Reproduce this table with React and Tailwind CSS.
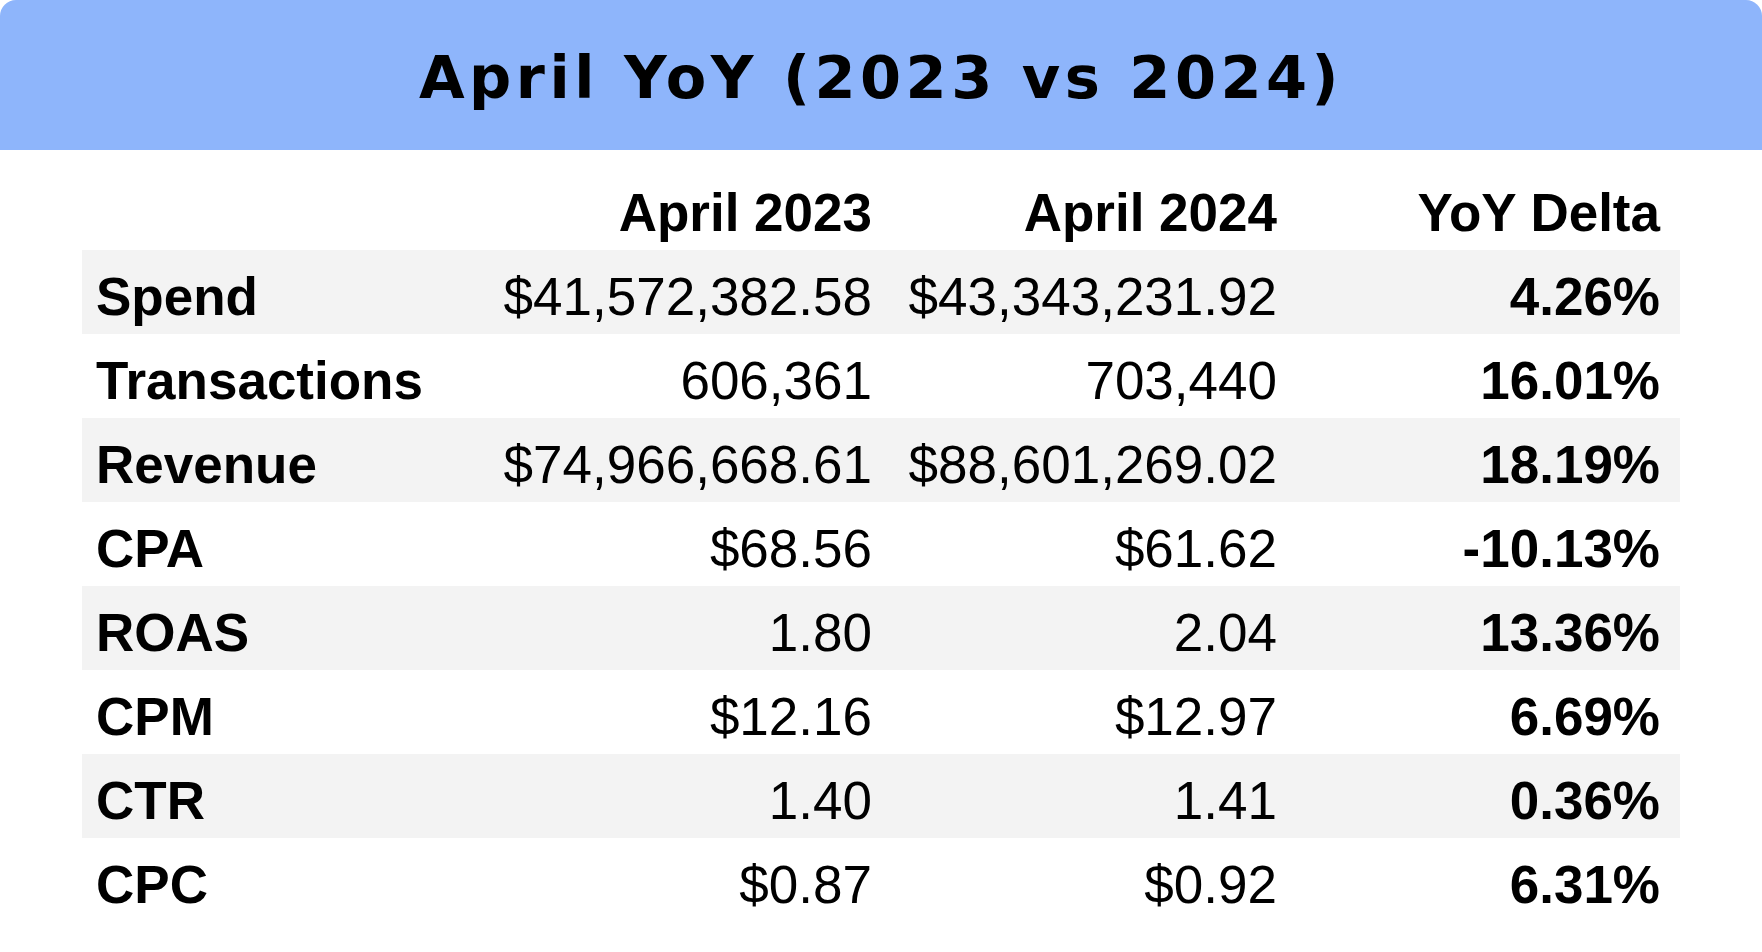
import React from 'react';

const rows = [
  ['Spend', '$41,572,382.58', '$43,343,231.92', '4.26%'],
  ['Transactions', '606,361', '703,440', '16.01%'],
  ['Revenue', '$74,966,668.61', '$88,601,269.02', '18.19%'],
  ['CPA', '$68.56', '$61.62', '-10.13%'],
  ['ROAS', '1.80', '2.04', '13.36%'],
  ['CPM', '$12.16', '$12.97', '6.69%'],
  ['CTR', '1.40', '1.41', '0.36%'],
  ['CPC', '$0.87', '$0.92', '6.31%'],
];

const cols = 'grid grid-cols-[404px_372px_405px_383px] h-[84px] pl-[14px] pr-[18px] pt-[9px] leading-[75px]';

export default function App() {
  return (
    <div className="w-[1762px] h-[952px] bg-white text-black overflow-hidden font-['Liberation_Sans',Arial,sans-serif]">
      <div className="h-[150px] bg-[#8eb5fb] rounded-t-[16px] flex items-center justify-center pt-[5px]">
        <h1 className="font-['DejaVu_Sans',sans-serif] font-bold text-[59px] leading-none tracking-[4.5px]">
          April YoY (2023 vs 2024)
        </h1>
      </div>

      <div className="mx-[82px] mt-[16px] text-[53px]">
        <div className={cols + ' font-bold'}>
          <span></span>
          <span className="text-right">April 2023</span>
          <span className="text-right">April 2024</span>
          <span className="text-right">YoY Delta</span>
        </div>
        {rows.map((r, i) => (
          <div key={r[0]} className={cols + (i % 2 === 0 ? ' bg-[#f3f3f3]' : '')}>
            <span className="font-bold">{r[0]}</span>
            <span className="text-right">{r[1]}</span>
            <span className="text-right">{r[2]}</span>
            <span className="text-right font-bold">{r[3]}</span>
          </div>
        ))}
      </div>
    </div>
  );
}
